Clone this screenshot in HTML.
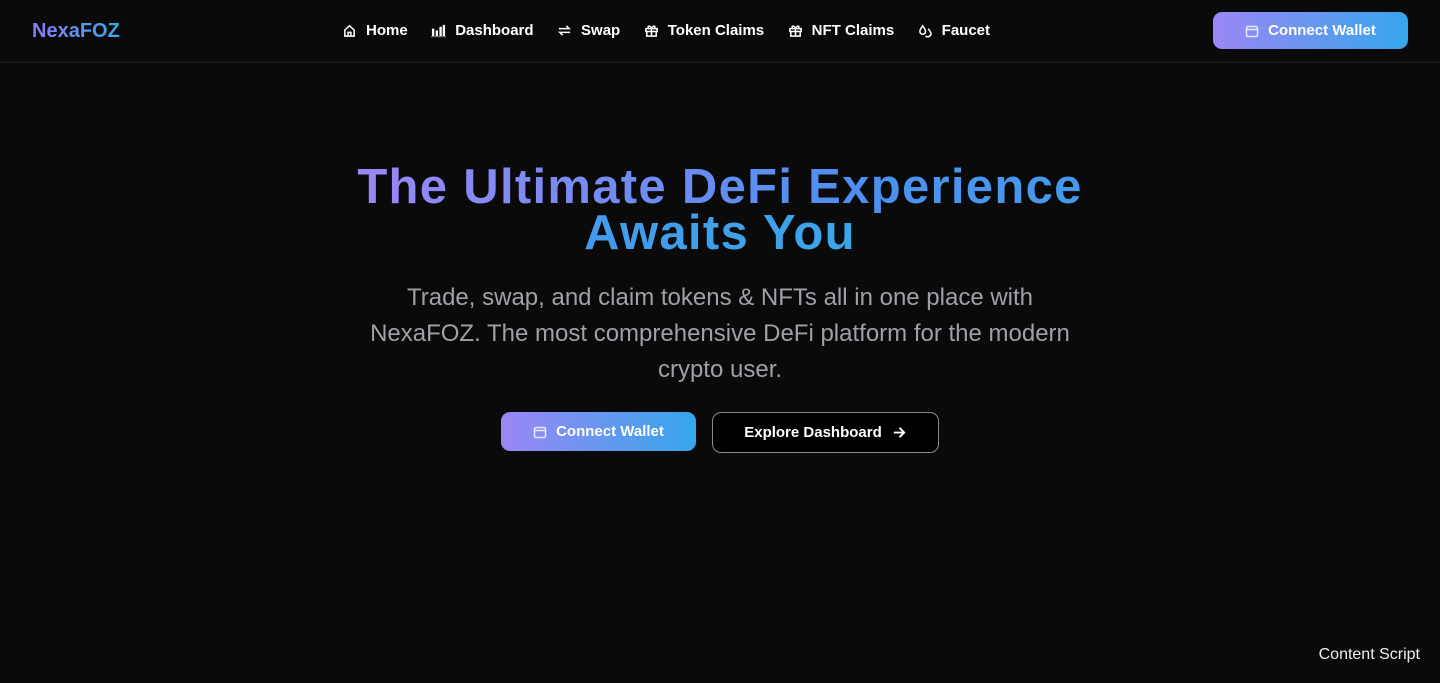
<!DOCTYPE html>
<html><head><meta charset="utf-8"><style>
*{margin:0;padding:0;box-sizing:border-box}
body{width:1440px;height:683px;background:#0a0a0a;font-family:"Liberation Sans",sans-serif;color:#fff;overflow:hidden;position:relative}
header{height:63px;border-bottom:2px solid #161616;position:relative}
.logo{position:absolute;left:32px;top:20px;font-size:20px;font-weight:bold;background:linear-gradient(90deg,#8b7cf6,#3aa6e9);-webkit-background-clip:text;color:transparent}
nav{position:absolute;left:342px;top:22px;display:flex;gap:23.5px;font-size:15px;font-weight:bold}
nav span{display:flex;align-items:center;gap:9px}
nav svg{width:15px;height:15px;stroke:#fff;fill:none;stroke-width:1.6}
.btn{position:absolute;display:flex;align-items:center;justify-content:center;gap:9px;font-weight:bold;font-size:15px;border-radius:9px;background:linear-gradient(90deg,#9b87f5,#35a6ea)}
.btn svg{width:14px;height:14px;stroke:#e8e8ff;fill:none;stroke-width:1.5}
h1{position:absolute;top:164px;left:0;width:1440px;text-align:center;font-size:49px;line-height:46px;font-weight:bold;letter-spacing:1.3px}
h1 span{background:linear-gradient(90deg,#9b87f5 0%,#4d8fef 50%,#3aa6e9 100%);-webkit-background-clip:text;color:transparent}
p{position:absolute;top:280px;left:220px;width:1000px;text-align:center;font-size:24px;line-height:36px;color:#a0a0a8}
.out{position:absolute;left:712px;top:412px;width:227px;height:41px;border:1px solid #8a8a8a;border-radius:9px;background:#000;display:flex;align-items:center;justify-content:center;gap:10px;font-weight:bold;font-size:15px}
.cs{position:absolute;right:20px;top:646px;font-size:16px;color:#eee}
</style></head><body>
<header>
<div class="logo">NexaFOZ</div>
<nav>
<span><svg viewBox="0 0 16 16"><path d="M3 7.5 8 3l5 4.5V14H3z M6.5 14v-4h3v4"/></svg>Home</span>
<span><svg viewBox="0 0 16 16" style="fill:#fff;stroke:none"><rect x="1" y="6" width="2.5" height="8"/><rect x="5" y="8" width="2.5" height="6"/><rect x="9" y="4" width="2.5" height="10"/><rect x="12.5" y="2" width="2.5" height="12"/><rect x="0" y="14" width="16" height="1.2" fill="#777"/></svg>Dashboard</span>
<span><svg viewBox="0 0 16 16"><path d="M2 6h11l-3-3 M14 10H3l3 3"/></svg>Swap</span>
<span><svg viewBox="0 0 16 16"><path d="M2 6h12v3H2z M3 9v5h10V9 M8 6v8 M8 6C6 2 3 3 5 6 M8 6c2-4 5-3 3 0"/></svg>Token Claims</span>
<span><svg viewBox="0 0 16 16"><path d="M2 6h12v3H2z M3 9v5h10V9 M8 6v8 M8 6C6 2 3 3 5 6 M8 6c2-4 5-3 3 0"/></svg>NFT Claims</span>
<span><svg viewBox="0 0 16 16"><path d="M5 3c-2 3-3 4-3 6a3 3 0 0 0 6 0c0-2-1-3-3-6z M11 6c1 2 3 4 3 6a4 4 0 0 1-6 2"/></svg>Faucet</span>
</nav>
<div class="btn" style="left:1213px;top:12px;width:195px;height:37px"><svg viewBox="0 0 14 14"><rect x="1.5" y="2.5" width="11" height="10" rx="1.5"/><path d="M1.5 5.5h11"/></svg>Connect Wallet</div>
</header>
<h1><span>The Ultimate DeFi Experience<br>Awaits You</span></h1>
<p>Trade, swap, and claim tokens &amp; NFTs all in one place with<br>NexaFOZ. The most comprehensive DeFi platform for the modern<br>crypto user.</p>
<div class="btn" style="left:501px;top:412px;width:195px;height:39px"><svg viewBox="0 0 14 14"><rect x="1.5" y="2.5" width="11" height="10" rx="1.5"/><path d="M1.5 5.5h11"/></svg>Connect Wallet</div>
<div class="out">Explore Dashboard <svg width="15" height="15" viewBox="0 0 16 16" fill="none" stroke="#fff" stroke-width="2"><path d="M2 8h11 M8 3l5 5-5 5"/></svg></div>
<div class="cs">Content Script</div>
</body></html>
